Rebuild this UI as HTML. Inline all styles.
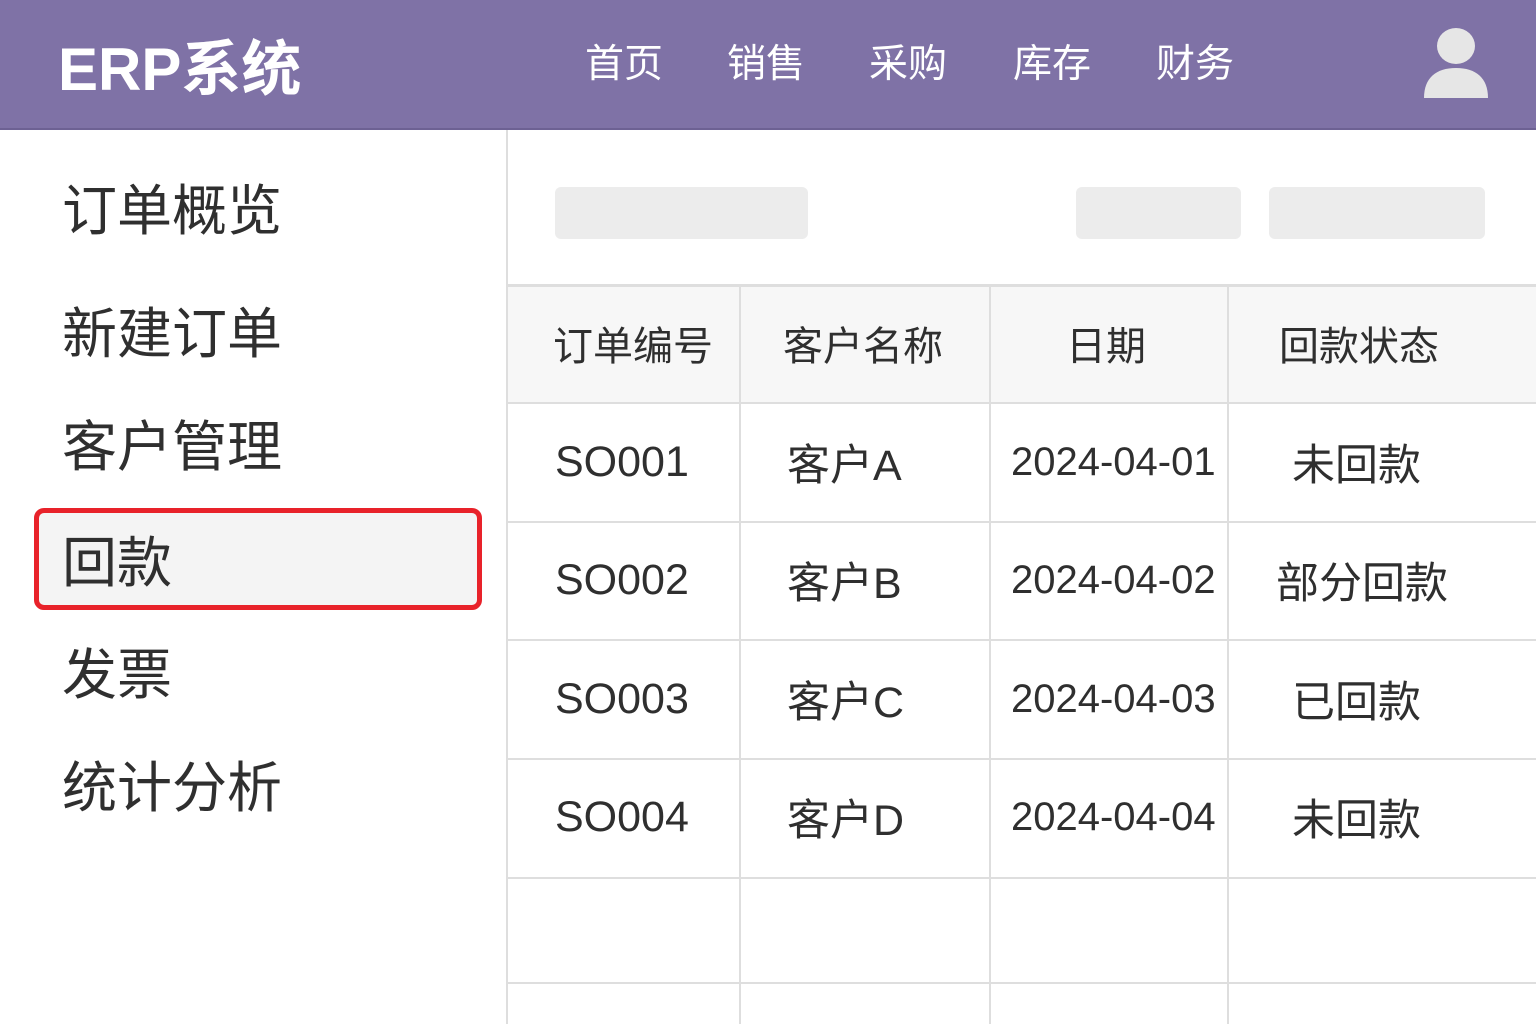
<!DOCTYPE html>
<html><head><meta charset="utf-8"><style>
body{margin:0;width:1536px;height:1024px;overflow:hidden;background:#fff;font-family:"Liberation Sans","Noto Sans CJK SC",sans-serif;position:relative;color:#2f2f2f}
.a{position:absolute;white-space:nowrap}
.hdr{position:absolute;left:0;top:0;width:1536px;height:128px;background:#7f72a6;border-bottom:2px solid #6d6193}
.nav{color:#fff;font-size:39px;top:33px}
.side{font-size:55px;left:62px;color:#2f2f2f}
.ph{position:absolute;background:#ececec;border-radius:6px;top:187px;height:52px}
.vl{position:absolute;width:2px;background:#dedede;top:285px;height:739px}
.hl{position:absolute;height:2px;background:#dedede;left:507px;width:1029px}
.c{font-size:43px;color:#2f2f2f}
.d{font-size:40px}
.h{font-size:40px;color:#2f2f2f;top:314px}
</style></head><body>
<div class="hdr"></div>
<div class="a" style="left:58px;top:21px;font-size:60px;font-weight:bold;color:#fff">ERP系统</div>
<div class="a nav" style="left:585px">首页</div>
<div class="a nav" style="left:727px">销售</div>
<div class="a nav" style="left:869px">采购</div>
<div class="a nav" style="left:1013px">库存</div>
<div class="a nav" style="left:1156px">财务</div>
<svg class="a" style="left:1422px;top:28px" width="68" height="72" viewBox="0 0 68 72"><ellipse cx="34" cy="18" rx="19" ry="18" fill="#e6e6e6"/><path d="M2 70 C2 50 14 40 34 40 C54 40 66 50 66 70 Z" fill="#e6e6e6"/></svg>
<div class="a" style="left:506px;top:130px;width:2px;height:894px;background:#dedede"></div>
<div class="a side" style="top:166px">订单概览</div>
<div class="a side" style="top:289px">新建订单</div>
<div class="a side" style="top:402px">客户管理</div>
<div class="a" style="left:34px;top:508px;width:438px;height:92px;border:5px solid #e8222a;border-radius:10px;background:#f4f4f4"></div>
<div class="a side" style="top:518px">回款</div>
<div class="a side" style="top:630px">发票</div>
<div class="a side" style="top:743px">统计分析</div>
<div class="ph" style="left:555px;width:253px"></div>
<div class="ph" style="left:1076px;width:165px"></div>
<div class="ph" style="left:1269px;width:216px"></div>
<div class="a" style="left:508px;top:285px;width:1028px;height:118px;background:#f7f7f7"></div>
<div class="hl" style="top:284px;height:3px"></div>
<div class="hl" style="top:402px"></div>
<div class="hl" style="top:521px"></div>
<div class="hl" style="top:639px"></div>
<div class="hl" style="top:758px"></div>
<div class="hl" style="top:877px"></div>
<div class="hl" style="top:982px"></div>
<div class="vl" style="left:739px"></div>
<div class="vl" style="left:989px"></div>
<div class="vl" style="left:1227px"></div>
<div class="a h" style="left:553px">订单编号</div>
<div class="a h" style="left:783px">客户名称</div>
<div class="a h" style="left:1066px">日期</div>
<div class="a h" style="left:1279px">回款状态</div>
<div class="a c" style="left:555px;top:438px">SO001</div>
<div class="a c" style="left:787px;top:431px">客户A</div>
<div class="a c d" style="left:1011px;top:440px">2024-04-01</div>
<div class="a c" style="left:1292px;top:431px">未回款</div>
<div class="a c" style="left:555px;top:556px">SO002</div>
<div class="a c" style="left:787px;top:549px">客户B</div>
<div class="a c d" style="left:1011px;top:558px">2024-04-02</div>
<div class="a c" style="left:1276px;top:549px">部分回款</div>
<div class="a c" style="left:555px;top:675px">SO003</div>
<div class="a c" style="left:787px;top:668px">客户C</div>
<div class="a c d" style="left:1011px;top:677px">2024-04-03</div>
<div class="a c" style="left:1292px;top:668px">已回款</div>
<div class="a c" style="left:555px;top:793px">SO004</div>
<div class="a c" style="left:787px;top:786px">客户D</div>
<div class="a c d" style="left:1011px;top:795px">2024-04-04</div>
<div class="a c" style="left:1292px;top:786px">未回款</div>
</body></html>
